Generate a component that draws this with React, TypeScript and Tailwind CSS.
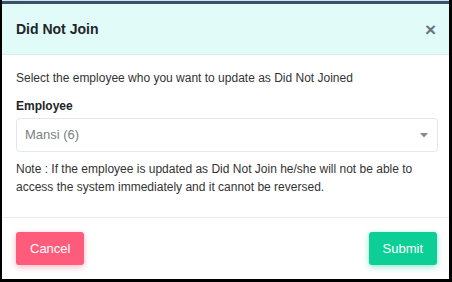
export default function App() {
  return (
    <div className="w-[452px] h-[282px] bg-white border-l-2 border-r-[3px] border-b-[3px] border-black flex flex-col font-['Liberation_Sans',Arial,sans-serif] text-[#212529]">
      <div className="h-px bg-[#d9e0e4]" />
      <div className="h-[3px] bg-[#34506a]" />
      <div className="h-[51px] bg-[#e0fbf8] border-b border-[#d6ecea] flex items-center justify-between pl-[14px] pr-[13px]">
        <h2 className="font-bold text-[14px]">Did Not Join</h2>
        <span className="text-[#6c757d] text-[19px] font-bold leading-none">×</span>
      </div>

      <div className="pl-[14px] pr-[11px] pt-[14px] text-[12px] leading-[18px]">
        <p className="text-[#333]">Select the employee who you want to update as Did Not Joined</p>

        <label className="block font-bold text-[12px] mt-[10px] mb-[3px]">Employee</label>
        <div className="h-[34px] border border-[#e4e7ea] rounded-[4px] flex items-center justify-between pl-[8px] pr-[9px]">
          <span className="text-[#7b7f83] text-[13px]">Mansi (6)</span>
          <svg width="8" height="5" viewBox="0 0 8 5">
            <path d="M0 0 L8 0 L4 4.5 Z" fill="#888" />
          </svg>
        </div>

        <p className="mt-[8px] text-[#333]">
          Note : If the employee is updated as Did Not Join he/she will not be able to access the system immediately and it cannot be reversed.
        </p>
      </div>

      <div className="mt-auto border-t border-[#e9ecef] flex items-center justify-between pl-[14px] pr-[12px] pt-[14px] pb-[14px]">
        <button className="h-[33px] px-[14px] rounded-[3px] bg-[#ff5b7b] text-white text-[13px] shadow-[0_2px_6px_rgba(255,91,123,0.45)]">
          Cancel
        </button>
        <button className="h-[33px] px-[14px] rounded-[3px] bg-[#0ccf96] text-white text-[13px] shadow-[0_2px_6px_rgba(12,207,150,0.45)]">
          Submit
        </button>
      </div>
    </div>
  );
}
